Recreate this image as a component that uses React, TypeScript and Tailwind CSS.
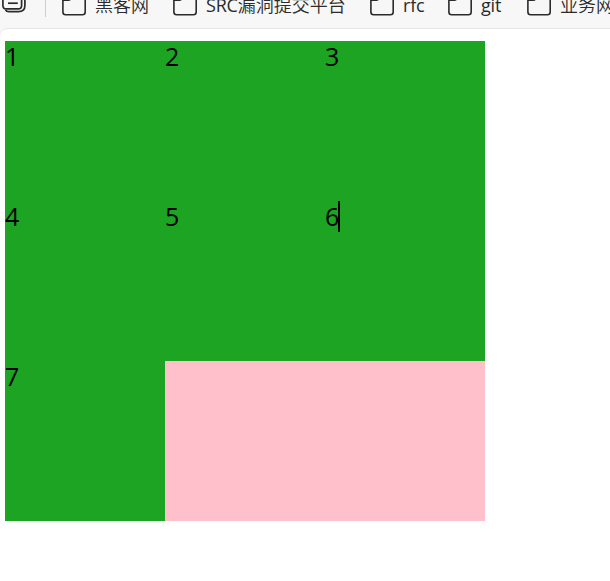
import React from "react";

function FolderIcon() {
  return (
    <svg className="block h-[28px] w-[26px] shrink-0" viewBox="0 0 26 28" fill="none" stroke="#2b2b2b" strokeWidth="1.6">
      <path d="M0.9 -5V12Q0.9 14.8 3.7 14.8H20.4Q23.2 14.8 23.2 12V-5" />
      <path d="M0.9 0.3H6.2Q7.6 0.3 8.4 -0.7L10 -2.4" />
    </svg>
  );
}

function CollectionsIcon() {
  return (
    <svg className="block h-[28px] w-[28px] shrink-0" viewBox="0 0 28 28" fill="none" stroke="#2b2b2b" strokeWidth="1.7">
      <path d="M2.9 -4V5.4Q2.9 8.8 6.3 8.8H18.2Q21.6 8.8 21.6 5.4V-4" />
      <path d="M8 3.2H17.8" />
      <path d="M24.9 -2V5.5Q24.9 11.7 18.5 11.7H9Q6.4 11.7 5.5 9.8" />
    </svg>
  );
}

const bookmarks = [
  { latin: "", han: "黑客网", width: "w-[111px]" },
  { latin: "SRC", han: "漏洞提交平台", width: "w-[197px]" },
  { latin: "rfc", han: "", width: "w-[78px]" },
  { latin: "git", han: "", width: "w-[79px]" },
  { latin: "", han: "业务网", width: "w-[100px]" },
];

const cells = ["1", "2", "3", "4", "5", "6", "7"];

export default function App() {
  return (
    <div className="h-[581px] w-[610px] overflow-hidden bg-[#f7f7f7] text-black">
      <div className="flex h-[28px] w-[720px] overflow-hidden text-[#2b2b2b]">
        <CollectionsIcon />
        <div className="ml-[17px] h-[17px] w-px shrink-0 bg-[#cccccc]" />
        <div className="ml-[16px] flex">
          {bookmarks.map((item) => (
            <div key={item.latin + item.han} className={`flex shrink-0 ${item.width}`}>
              <FolderIcon />
              <span className="-mt-[9px] ml-[7px] whitespace-nowrap font-['Open_Sans','Noto_Sans_CJK_SC',sans-serif] text-[18px] leading-[28px]">
                {item.latin && <span className="tracking-[-0.2px]">{item.latin}</span>}
                {item.han && <span className="font-[350]">{item.han}</span>}
              </span>
            </div>
          ))}
        </div>
      </div>
      <div className="h-[553px] rounded-tl-[8px] border-t border-[#e6e6e6] bg-white pl-[5px] pt-[12px]">
        <div className="grid h-[480px] w-[480px] grid-cols-3 grid-rows-3 bg-[#ffc0cb]">
          {cells.map((cell) => (
            <div key={cell} className="flex items-start bg-[#1ca422] font-['Open_Sans',sans-serif] text-[25px] leading-[30px]">
              <span className="w-[13px]">{cell}</span>
              {cell === "6" && <span className="h-[31px] w-[2px] bg-black" />}
            </div>
          ))}
        </div>
      </div>
    </div>
  );
}
